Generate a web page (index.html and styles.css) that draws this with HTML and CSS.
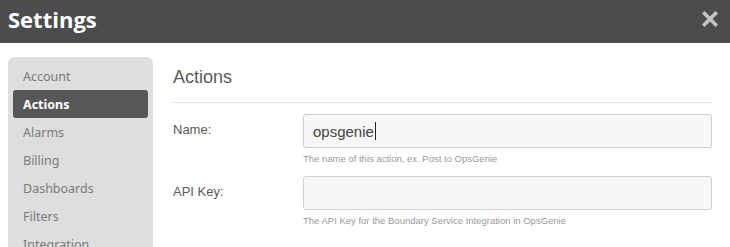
FILE: index.html
```html
<!DOCTYPE html>
<html>
<head>
<meta charset="utf-8">
<link rel="stylesheet" href="styles.css">
</head>
<body>
<header class="topbar">
  <h1 class="title">Settings</h1>
  <span class="close">
    <svg width="16" height="16" viewBox="0 0 16 16"><path d="M2.5 2.5 L13.5 13.5 M13.5 2.5 L2.5 13.5" stroke="#c4c4c4" stroke-width="3.6" stroke-linecap="square"/></svg>
  </span>
</header>
<div class="main">
  <nav class="sidebar">
    <div class="nav-item">Account</div>
    <div class="nav-item active">Actions</div>
    <div class="nav-item">Alarms</div>
    <div class="nav-item">Billing</div>
    <div class="nav-item">Dashboards</div>
    <div class="nav-item">Filters</div>
    <div class="nav-item">Integration</div>
  </nav>
  <section class="content">
    <h2 class="heading">Actions</h2>
    <div class="field">
      <label class="label">Name:</label>
      <div class="control">
        <div class="input">opsgenie<span class="caret"></span></div>
        <div class="help">The name of this action, ex. Post to OpsGenie</div>
      </div>
    </div>
    <div class="field">
      <label class="label">API Key:</label>
      <div class="control">
        <div class="input"></div>
        <div class="help">The API Key for the Boundary Service Integration in OpsGenie</div>
      </div>
    </div>
  </section>
</div>
</body>
</html>
```

FILE: styles.css
```css
html, body {
  margin: 0;
  padding: 0;
  background: #fff;
  overflow: hidden;
  height: 247px;
}
body {
  font-family: "Liberation Sans", Arial, sans-serif;
}
.topbar {
  height: 43px;
  background: #4c4c4e;
  display: flex;
  align-items: center;
  justify-content: space-between;
  padding: 0 12px 0 8px;
}
.title {
  margin: 0;
  font-family: "Open Sans", sans-serif;
  font-weight: 700;
  font-size: 22px;
  color: #fff;
  position: relative;
  top: -3px;
}
.close {
  display: flex;
  position: relative;
  top: -3px;
}
.main {
  display: flex;
  padding: 14px 18px 0 8px;
  gap: 20px;
}
.sidebar {
  width: 145px;
  flex: none;
  background: #dedede;
  border-radius: 6px;
  padding: 5px 5px 0 5px;
  box-sizing: border-box;
  height: 200px;
}
.nav-item {
  height: 28px;
  line-height: 29px;
  padding-left: 10px;
  font-family: "Noto Sans", sans-serif;
  font-size: 12.5px;
  color: #7a7a7a;
  border-radius: 3px;
  white-space: nowrap;
}
.nav-item.active {
  background: #575757;
  color: #fff;
  font-weight: 700;
}
.content {
  flex: 1;
  min-width: 0;
}
.heading {
  margin: 9px 0 0 0;
  font-weight: 400;
  font-size: 18px;
  line-height: 22px;
  color: #5a5a5a;
  padding-bottom: 14px;
  border-bottom: 1px solid #e4e4dc;
  font-family: "Liberation Sans", Arial, sans-serif;
}
.field {
  display: grid;
  grid-template-columns: 130px 1fr;
  margin-top: 11px;
}
.field + .field {
  margin-top: 11px;
}
.label {
  font-size: 13px;
  color: #5a5a5a;
  padding-top: 8px;
}
.input {
  height: 34px;
  box-sizing: border-box;
  border: 1px solid #cfcfcf;
  border-radius: 3px;
  background: #f7f7f7;
  padding-left: 9px;
  font-size: 15px;
  color: #444;
  display: flex;
  align-items: center;
}
.caret {
  display: inline-block;
  width: 1px;
  height: 18px;
  background: #222;
  margin-left: 1px;
}
.help {
  font-size: 9.5px;
  color: #9a9a9a;
  margin-top: 5px;
  line-height: 12px;
}
```
